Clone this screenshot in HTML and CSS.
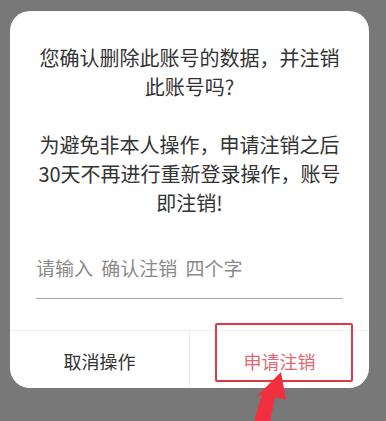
FILE: index.html
```html
<!DOCTYPE html>
<html lang="zh-CN">
<head>
<meta charset="utf-8">
<link rel="stylesheet" href="styles.css">
</head>
<body>
<div class="dialog">
  <div class="content">
    <p class="msg">您确认删除此账号的数据，并注销<br>此账号吗?</p>
    <p class="msg">为避免非本人操作，申请注销之后<br>30天不再进行重新登录操作，账号<br>即注销!</p>
  </div>
  <div class="field">
    <span class="placeholder">请输入 确认注销 四个字</span>
  </div>
  <div class="actions">
    <div class="btn cancel">取消操作</div>
    <div class="btn confirm">申请注销</div>
  </div>
</div>
<div class="highlight"></div>
<svg class="arrow" width="50" height="60" viewBox="0 0 50 60">
  <polygon points="41,2 46,30 35,27 30,52 14,52 22,24 16,27" fill="#f0303e"/>
</svg>
</body>
</html>
```

FILE: styles.css
```css
html, body {
  margin: 0;
  padding: 0;
}
body {
  width: 386px;
  height: 421px;
  background: #787878;
  font-family: "Noto Sans CJK SC", "Noto Sans", sans-serif;
  position: relative;
  overflow: hidden;
}
.dialog {
  margin: 11px 0 0 10px;
  width: 359px;
  background: #ffffff;
  border-radius: 20px;
  overflow: hidden;
  display: flex;
  flex-direction: column;
}
.content {
  padding: 32px 20px 0;
  text-align: center;
  color: #333333;
  font-size: 20px;
  line-height: 29px;
}
.msg {
  margin: 0;
}
.msg + .msg {
  margin-top: 29px;
}
.field {
  margin: 38px 26px 0 26px;
  padding-bottom: 17px;
  border-bottom: 1.5px solid #a8a8a8;
  font-size: 19px;
  line-height: 26px;
  word-spacing: 4px;
  color: #8a8a8a;
}
.actions {
  margin-top: 31px;
  display: flex;
  border-top: 1px solid #efefef;
  height: 57px;
}
.btn {
  flex: 1;
  display: flex;
  align-items: center;
  justify-content: center;
  font-size: 18px;
  padding-top: 2px;
}
.cancel {
  color: #333333;
  border-right: 1px solid #efefef;
}
.confirm {
  color: #e2676e;
}
.highlight {
  position: absolute;
  left: 215px;
  top: 323px;
  width: 134px;
  height: 55px;
  border: 2.5px solid #dc3a45;
  border-radius: 2px;
}
.arrow {
  position: absolute;
  left: 240px;
  top: 370px;
}
```
